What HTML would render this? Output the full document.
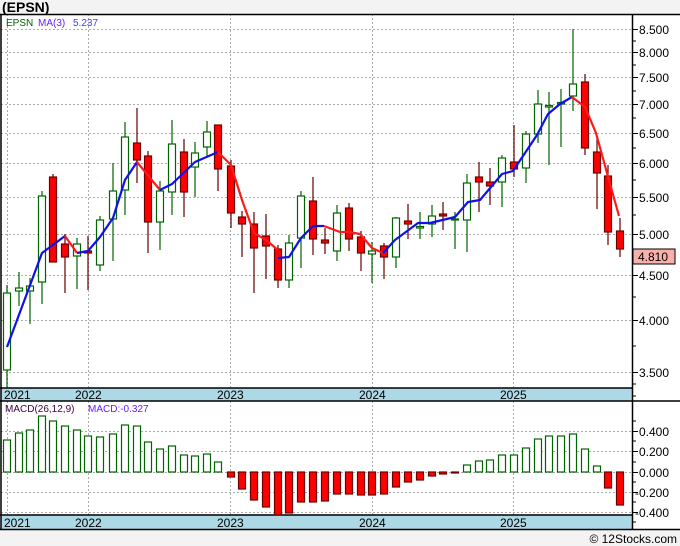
<!DOCTYPE html>
<html><head><meta charset="utf-8"><style>
html,body{margin:0;padding:0;background:#f3f3f3;}
svg{display:block;}
text{font-family:"Liberation Sans","DejaVu Sans",sans-serif;}
</style></head><body>
<svg width="680" height="546" viewBox="0 0 680 546" xmlns="http://www.w3.org/2000/svg">
<rect x="0" y="0" width="680" height="546" fill="#f3f3f3"/>
<text x="2" y="12" font-size="14" font-weight="bold" fill="#000">(EPSN)</text>
<!-- main panel -->
<rect x="1" y="14" width="631" height="374" fill="#fff"/>
<rect x="1" y="401" width="631" height="114" fill="#fff"/>
<rect x="632" y="14" width="48" height="516" fill="#fff"/>
<g stroke="#aaa" stroke-width="1" stroke-dasharray="2,2">
<line x1="1" x2="632" y1="29.5" y2="29.5"/><line x1="1" x2="632" y1="52.5" y2="52.5"/><line x1="1" x2="632" y1="77.5" y2="77.5"/><line x1="1" x2="632" y1="104.5" y2="104.5"/><line x1="1" x2="632" y1="133.5" y2="133.5"/><line x1="1" x2="632" y1="163.5" y2="163.5"/><line x1="1" x2="632" y1="197.5" y2="197.5"/><line x1="1" x2="632" y1="234.5" y2="234.5"/><line x1="1" x2="632" y1="275.5" y2="275.5"/><line x1="1" x2="632" y1="320.5" y2="320.5"/><line x1="1" x2="632" y1="372.5" y2="372.5"/>
<line x1="1" x2="632" y1="431.5" y2="431.5"/><line x1="1" x2="632" y1="451.5" y2="451.5"/><line x1="1" x2="632" y1="472.5" y2="472.5"/><line x1="1" x2="632" y1="492.5" y2="492.5"/><line x1="1" x2="632" y1="512.5" y2="512.5"/>
<line x1="7.5" x2="7.5" y1="14" y2="388"/><line x1="88.5" x2="88.5" y1="14" y2="388"/><line x1="230.5" x2="230.5" y1="14" y2="388"/><line x1="372.5" x2="372.5" y1="14" y2="388"/><line x1="513.5" x2="513.5" y1="14" y2="388"/>
<line x1="7.5" x2="7.5" y1="401" y2="515"/><line x1="88.5" x2="88.5" y1="401" y2="515"/><line x1="230.5" x2="230.5" y1="401" y2="515"/><line x1="372.5" x2="372.5" y1="401" y2="515"/><line x1="513.5" x2="513.5" y1="401" y2="515"/>
</g>
<!-- date bars -->
<rect x="1" y="388" width="631" height="13" fill="#add8e6"/>
<rect x="1" y="515" width="631" height="14" fill="#add8e6"/>
<g stroke="#000" stroke-width="1.5">
<line x1="0" x2="680" y1="14.5" y2="14.5"/>
<line x1="0" x2="632" y1="388" y2="388"/><line x1="0" x2="680" y1="401" y2="401"/>
<line x1="0" x2="632" y1="515" y2="515"/><line x1="0" x2="680" y1="529.5" y2="529.5"/>
<line x1="1" x2="1" y1="14" y2="530"/><line x1="632.5" x2="632.5" y1="14" y2="530"/>
</g>
<g font-size="12" fill="#000">
<text x="4" y="399">2021</text><text x="75" y="399">2022</text><text x="217" y="399">2023</text><text x="359" y="399">2024</text><text x="500" y="399">2025</text>
<text x="4" y="527">2021</text><text x="75" y="527">2022</text><text x="217" y="527">2023</text><text x="359" y="527">2024</text><text x="500" y="527">2025</text>
</g>
<!-- axis ticks -->
<g stroke="#000" stroke-width="1">
<line x1="632" x2="638" y1="29.5" y2="29.5"/><line x1="632" x2="638" y1="52.5" y2="52.5"/><line x1="632" x2="638" y1="77.5" y2="77.5"/><line x1="632" x2="638" y1="104.5" y2="104.5"/><line x1="632" x2="638" y1="133.5" y2="133.5"/><line x1="632" x2="638" y1="163.5" y2="163.5"/><line x1="632" x2="638" y1="197.5" y2="197.5"/><line x1="632" x2="638" y1="234.5" y2="234.5"/><line x1="632" x2="638" y1="275.5" y2="275.5"/><line x1="632" x2="638" y1="320.5" y2="320.5"/><line x1="632" x2="638" y1="372.5" y2="372.5"/>
<line x1="632" x2="636" y1="41" y2="41"/><line x1="632" x2="636" y1="65" y2="65"/><line x1="632" x2="636" y1="91" y2="91"/><line x1="632" x2="636" y1="118" y2="118"/><line x1="632" x2="636" y1="148" y2="148"/><line x1="632" x2="636" y1="180" y2="180"/><line x1="632" x2="636" y1="215" y2="215"/><line x1="632" x2="636" y1="254" y2="254"/><line x1="632" x2="636" y1="297" y2="297"/><line x1="632" x2="636" y1="346" y2="346"/>
<line x1="632" x2="638" y1="431.5" y2="431.5"/><line x1="632" x2="638" y1="451.5" y2="451.5"/><line x1="632" x2="638" y1="472.5" y2="472.5"/><line x1="632" x2="638" y1="492.5" y2="492.5"/><line x1="632" x2="638" y1="512.5" y2="512.5"/>
<line x1="632" x2="636" y1="421" y2="421"/><line x1="632" x2="636" y1="441" y2="441"/><line x1="632" x2="636" y1="462" y2="462"/><line x1="632" x2="636" y1="482" y2="482"/><line x1="632" x2="636" y1="502" y2="502"/><line x1="632" x2="636" y1="522" y2="522"/><line x1="632" x2="636" y1="396" y2="396"/><line x1="632" x2="636" y1="384" y2="384"/>
</g>
<g font-size="12" fill="#000">
<text x="639" y="34">8.500</text><text x="639" y="57">8.000</text><text x="639" y="82">7.500</text><text x="639" y="109">7.000</text><text x="639" y="138">6.500</text><text x="639" y="168">6.000</text><text x="639" y="202">5.500</text><text x="639" y="239">5.000</text><text x="639" y="280">4.500</text><text x="639" y="325">4.000</text><text x="639" y="377">3.500</text>
<text x="639" y="436">0.400</text><text x="639" y="456">0.200</text><text x="639" y="477">0.000</text><text x="635" y="497">-0.200</text><text x="635" y="517">-0.400</text>
</g>
<rect x="633" y="249" width="42" height="15" fill="#f8b0aa" stroke="#000" stroke-width="1"/>
<text x="638" y="261" font-size="12" fill="#000">4.810</text>
<!-- legend -->
<text x="6" y="26" font-size="10" fill="#006400">EPSN</text>
<text x="38" y="26" font-size="10" fill="#6a1bff">MA(3)</text>
<text x="73" y="26" font-size="10" fill="#4040ff">5.237</text>
<text x="5" y="412" font-size="10" fill="#400040">MACD(26,12,9)</text>
<text x="88" y="412" font-size="10" fill="#6a1bff">MACD:-0.327</text>
<!-- candles -->
<g stroke-width="1.2">
<g stroke="#006400">
<line x1="7" x2="7" y1="285" y2="387"/><line x1="19" x2="19" y1="272" y2="306"/><line x1="30" x2="30" y1="278" y2="324"/><line x1="42" x2="42" y1="191" y2="304"/><line x1="77" x2="77" y1="238" y2="289"/><line x1="100" x2="100" y1="216" y2="271"/><line x1="113" x2="113" y1="163" y2="261"/><line x1="125" x2="125" y1="122" y2="215"/><line x1="160" x2="160" y1="181" y2="250"/><line x1="172" x2="172" y1="120" y2="215"/><line x1="195" x2="195" y1="142" y2="197"/><line x1="207" x2="207" y1="121" y2="157"/><line x1="289" x2="289" y1="235" y2="288"/><line x1="301" x2="301" y1="191" y2="268"/><line x1="337" x2="337" y1="205" y2="261"/><line x1="372" x2="372" y1="242" y2="283"/><line x1="396" x2="396" y1="217" y2="268"/><line x1="420" x2="420" y1="212" y2="239"/><line x1="432" x2="432" y1="205" y2="237"/><line x1="455" x2="455" y1="212" y2="249"/><line x1="467" x2="467" y1="174" y2="252"/><line x1="502" x2="502" y1="155" y2="207"/><line x1="526" x2="526" y1="131" y2="183"/><line x1="538" x2="538" y1="90" y2="143"/><line x1="549" x2="549" y1="92" y2="165"/><line x1="561" x2="561" y1="89" y2="147"/><line x1="573" x2="573" y1="29" y2="111"/>
</g>
<g stroke="#600000">
<line x1="53" x2="53" y1="174" y2="262"/><line x1="65" x2="65" y1="234" y2="293"/><line x1="88" x2="88" y1="236" y2="290"/><line x1="137" x2="137" y1="108" y2="183"/><line x1="148" x2="148" y1="151" y2="253"/><line x1="184" x2="184" y1="139" y2="217"/><line x1="218" x2="218" y1="125" y2="191"/><line x1="231" x2="231" y1="160" y2="228"/><line x1="242" x2="242" y1="211" y2="257"/><line x1="254" x2="254" y1="212" y2="293"/><line x1="266" x2="266" y1="214" y2="279"/><line x1="278" x2="278" y1="245" y2="288"/><line x1="313" x2="313" y1="177" y2="255"/><line x1="325" x2="325" y1="228" y2="254"/><line x1="349" x2="349" y1="203" y2="251"/><line x1="361" x2="361" y1="231" y2="271"/><line x1="384" x2="384" y1="243" y2="279"/><line x1="408" x2="408" y1="204" y2="239"/><line x1="443" x2="443" y1="202" y2="230"/><line x1="479" x2="479" y1="162" y2="212"/><line x1="490" x2="490" y1="168" y2="205"/><line x1="514" x2="514" y1="125" y2="177"/><line x1="585" x2="585" y1="74" y2="155"/><line x1="597" x2="597" y1="137" y2="209"/><line x1="608" x2="608" y1="165" y2="245"/><line x1="620" x2="620" y1="218" y2="257"/>
</g>
<g fill="#fff" stroke="#006400">
<rect x="3.5" y="293" width="7" height="77"/><rect x="15.5" y="288" width="7" height="3"/><rect x="26.5" y="286" width="7" height="5"/><rect x="38.5" y="196" width="7" height="86"/><rect x="73.5" y="244" width="7" height="12"/><rect x="96.5" y="220" width="7" height="45"/><rect x="109.5" y="191" width="7" height="28"/><rect x="121.5" y="137" width="7" height="53"/><rect x="156.5" y="191" width="7" height="31"/><rect x="168.5" y="144" width="7" height="48"/><rect x="191.5" y="153" width="7" height="14"/><rect x="203.5" y="132" width="7" height="15"/><rect x="285.5" y="243" width="7" height="37"/><rect x="297.5" y="196" width="7" height="42"/><rect x="333.5" y="213" width="7" height="38"/><rect x="368.5" y="251" width="7" height="3"/><rect x="392.5" y="218" width="7" height="39"/><rect x="416.5" y="226.5" width="7" height="1.5"/><rect x="428.5" y="216" width="7" height="8"/><rect x="451.5" y="219" width="7" height="1"/><rect x="463.5" y="183" width="7" height="37"/><rect x="498.5" y="158" width="7" height="24"/><rect x="522.5" y="134" width="7" height="34"/><rect x="534.5" y="104" width="7" height="30"/><rect x="545.5" y="105.5" width="7" height="1.5"/><rect x="557.5" y="102.5" width="7" height="1.5"/><rect x="569.5" y="84" width="7" height="12"/>
</g>
<g fill="#ff0000" stroke="#700000">
<rect x="49.5" y="177" width="7" height="85"/><rect x="61.5" y="244" width="7" height="13"/><rect x="84.5" y="251" width="7" height="2"/><rect x="133.5" y="143" width="7" height="17"/><rect x="144.5" y="156" width="7" height="66"/><rect x="180.5" y="152" width="7" height="40"/><rect x="214.5" y="125" width="7" height="44"/><rect x="227.5" y="166" width="7" height="47"/><rect x="238.5" y="217" width="7" height="7"/><rect x="250.5" y="224" width="7" height="24"/><rect x="262.5" y="236" width="7" height="10"/><rect x="274.5" y="249" width="7" height="31"/><rect x="309.5" y="201" width="7" height="38"/><rect x="321.5" y="240" width="7" height="3"/><rect x="345.5" y="208" width="7" height="31"/><rect x="357.5" y="237" width="7" height="16"/><rect x="380.5" y="246" width="7" height="11"/><rect x="404.5" y="221" width="7" height="3"/><rect x="439.5" y="214" width="7" height="2"/><rect x="475.5" y="177" width="7" height="5"/><rect x="486.5" y="182" width="7" height="4"/><rect x="510.5" y="162" width="7" height="7"/><rect x="581.5" y="82" width="7" height="66"/><rect x="593.5" y="152" width="7" height="21"/><rect x="604.5" y="176" width="7" height="56"/><rect x="616.5" y="231" width="7" height="18"/>
</g>
</g>
<!-- MA line -->
<g fill="none" stroke-width="2.2" stroke-linejoin="round">
<polyline stroke="#1010ee" points="7,347 42,253 65,236"/>
<polyline stroke="#ff1a1a" points="65,236 77,253"/>
<polyline stroke="#1010ee" points="77,253 88,251 100,237 113,218 125,180 137,162"/>
<polyline stroke="#ff1a1a" points="137,162 160,190"/>
<polyline stroke="#1010ee" points="160,190 172,184 195,162 218,152"/>
<polyline stroke="#ff1a1a" points="218,152 231,165 242,200 254,233 266,240 278,250"/>
<polyline stroke="#1010ee" points="278,258 289,257 301,238 313,226 324,226"/>
<polyline stroke="#ff1a1a" points="324,226 340,232 349,232 360,234 372,248 383,253"/>
<polyline stroke="#1010ee" points="383,253 395,240 418,223 430,223 455,217 468,202 480,200 502,174 513,171 525,153 537,135 548,114 560,104 572,97"/>
<polyline stroke="#ff1a1a" points="572,97 585,107 596,133 607,173 619,216"/>
</g>
<!-- MACD -->
<g fill="#fff" stroke="#006400" stroke-width="1.2">
<rect x="3.5" y="440" width="7" height="32"/><rect x="15.5" y="433" width="7" height="39"/><rect x="26.5" y="430" width="7" height="42"/><rect x="38.5" y="416" width="7" height="56"/><rect x="49.5" y="421" width="7" height="51"/><rect x="61.5" y="426" width="7" height="46"/><rect x="73.5" y="430" width="7" height="42"/><rect x="84.5" y="436" width="7" height="36"/><rect x="96.5" y="437" width="7" height="35"/><rect x="109.5" y="434" width="7" height="38"/><rect x="121.5" y="425" width="7" height="47"/><rect x="133.5" y="426" width="7" height="46"/><rect x="144.5" y="442" width="7" height="30"/><rect x="156.5" y="449" width="7" height="23"/><rect x="168.5" y="446" width="7" height="26"/><rect x="180.5" y="455" width="7" height="17"/><rect x="191.5" y="456" width="7" height="16"/><rect x="203.5" y="454" width="7" height="18"/><rect x="214.5" y="462" width="7" height="10"/>
<rect x="463.5" y="465" width="7" height="7"/><rect x="475.5" y="461" width="7" height="11"/><rect x="486.5" y="460" width="7" height="12"/><rect x="498.5" y="455" width="7" height="17"/><rect x="510.5" y="455" width="7" height="17"/><rect x="522.5" y="448" width="7" height="24"/><rect x="534.5" y="439" width="7" height="33"/><rect x="545.5" y="436" width="7" height="36"/><rect x="557.5" y="436" width="7" height="36"/><rect x="569.5" y="434" width="7" height="38"/><rect x="581.5" y="449" width="7" height="23"/><rect x="593.5" y="466" width="7" height="6"/>
</g>
<g fill="#ff0000" stroke="#700000" stroke-width="1.2">
<rect x="227.5" y="472" width="7" height="5"/><rect x="238.5" y="472" width="7" height="17"/><rect x="250.5" y="472" width="7" height="28"/><rect x="262.5" y="472" width="7" height="35"/><rect x="274.5" y="472" width="7" height="43"/><rect x="285.5" y="472" width="7" height="41"/><rect x="297.5" y="472" width="7" height="30"/><rect x="309.5" y="472" width="7" height="30"/><rect x="321.5" y="472" width="7" height="29"/><rect x="333.5" y="472" width="7" height="22"/><rect x="345.5" y="472" width="7" height="22"/><rect x="357.5" y="472" width="7" height="23"/><rect x="368.5" y="472" width="7" height="23"/><rect x="380.5" y="472" width="7" height="22"/><rect x="392.5" y="472" width="7" height="15"/><rect x="404.5" y="472" width="7" height="10"/><rect x="416.5" y="472" width="7" height="8"/><rect x="428.5" y="472" width="7" height="4"/><rect x="439.5" y="472" width="7" height="2"/><rect x="451.5" y="472" width="7" height="1"/><rect x="604.5" y="472" width="7" height="16"/><rect x="616.5" y="472" width="7" height="33"/>
</g>
<text x="677" y="543" font-size="12" fill="#000" text-anchor="end">© 12Stocks.com</text>
</svg>
</body></html>
